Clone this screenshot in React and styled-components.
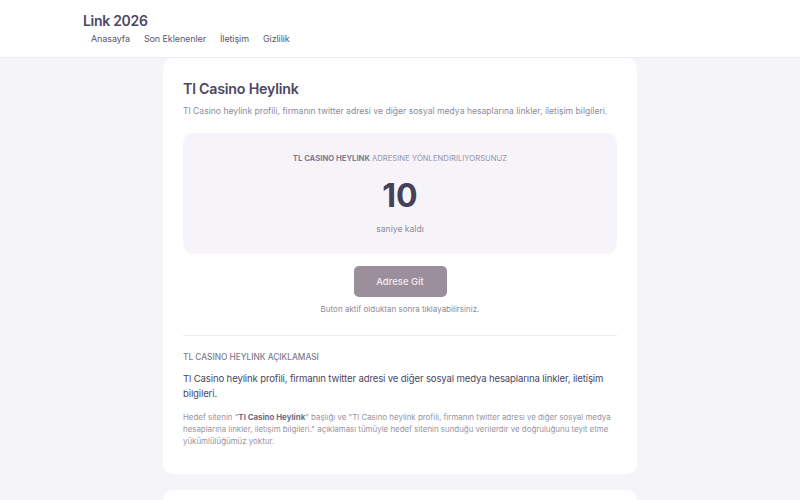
import React from "react"
import styled, { createGlobalStyle } from "styled-components"

const GlobalStyle = createGlobalStyle`
  html, body {
    margin: 0;
    padding: 0;
    background: #f5f4f8;
    font-family: Inter, "Noto Sans", sans-serif;
    color: #4a4762;
  }
  * { box-sizing: border-box; }
`

const Header = styled.header`
  background: #fff;
  border-bottom: 1px solid #ecebf0;
  height: 58px;
  padding: 12px 0 0 83px;
`

const Brand = styled.div`
  font-size: 14px;
  font-weight: 600;
  color: #4a4762;
  letter-spacing: -0.3px;
`

const Nav = styled.nav`
  display: flex;
  gap: 14px;
  margin: 4px 0 0 8px;
`

const NavItem = styled.span`
  font-size: 9px;
  color: #5a5770;
  letter-spacing: -0.1px;
  cursor: pointer;
`

const Main = styled.main`
  width: 474px;
  margin: 0 auto;
  display: flex;
  flex-direction: column;
  gap: 16px;
`

const Card = styled.section`
  background: #fff;
  border-radius: 10px;
  padding: 22px 20px 27px;
  min-height: ${p => p.$min || 0}px;
`

const Title = styled.h1`
  margin: 0;
  font-size: 14.2px;
  font-weight: 600;
  color: #4a4762;
  letter-spacing: -0.2px;
`

const Lead = styled.p`
  margin: 9px 0 0;
  font-size: 8.6px;
  color: #8d8a9c;
`

const Countdown = styled.div`
  margin-top: 17px;
  background: #f6f4f9;
  border-radius: 10px;
  height: 121px;
  display: flex;
  flex-direction: column;
  align-items: center;
  padding-top: 21px;
`

const Redirect = styled.div`
  font-size: 7.7px;
  color: #9793a6;
  text-transform: uppercase;
  b { color: #7e7b90; font-weight: 700; margin-right: 2px; }
`

const Seconds = styled.div`
  font-size: 32px;
  font-weight: 700;
  color: #444158;
  margin-top: 13px;
  line-height: 40px;
`

const Remain = styled.div`
  font-size: 8.6px;
  color: #8d8a9c;
  margin-top: 8px;
`

const Center = styled.div`
  display: flex;
  flex-direction: column;
  align-items: center;
  margin-top: 12px;
`

const GoButton = styled.button`
  width: 93px;
  height: 31px;
  border: none;
  border-radius: 5px;
  background: #9c8f9c;
  color: #f1eef2;
  font-family: inherit;
  font-size: 9.5px;
  font-weight: 500;
`

const Hint = styled.div`
  margin-top: 7px;
  font-size: 8px;
  color: #8d8a9c;
`

const Divider = styled.hr`
  border: none;
  border-top: 1px solid #ecebf0;
  margin: 21px 0 16px;
`

const SectionLabel = styled.h2`
  margin: 0;
  font-size: 8.3px;
  font-weight: 500;
  color: #7e7b90;
  text-transform: uppercase;
`

const Body = styled.p`
  margin: 9px 0 0;
  font-size: 9.6px;
  line-height: 15px;
  color: #4a4762;
  letter-spacing: -0.15px;
`

const Note = styled.p`
  margin: 10px 0 0;
  font-size: 7.9px;
  line-height: 12px;
  color: #97939f;
  b { color: #6f6c80; font-weight: 700; }
`

export default function App() {
  return (
    <>
      <GlobalStyle />
      <Header>
        <Brand>Link 2026</Brand>
        <Nav>
          <NavItem>Anasayfa</NavItem>
          <NavItem>Son Eklenenler</NavItem>
          <NavItem>İletişim</NavItem>
          <NavItem>Gizlilik</NavItem>
        </Nav>
      </Header>
      <Main>
        <Card>
          <Title>Tl Casino Heylink</Title>
          <Lead>Tl Casino heylink profili, firmanın twitter adresi ve diğer sosyal medya hesaplarına linkler, iletişim bilgileri.</Lead>
          <Countdown>
            <Redirect><b>Tl Casino Heylink</b>adresine yönlendiriliyorsunuz</Redirect>
            <Seconds>10</Seconds>
            <Remain>saniye kaldı</Remain>
          </Countdown>
          <Center>
            <GoButton disabled>Adrese Git</GoButton>
            <Hint>Buton aktif olduktan sonra tıklayabilirsiniz.</Hint>
          </Center>
          <Divider />
          <SectionLabel>Tl Casino Heylink Açıklaması</SectionLabel>
          <Body>Tl Casino heylink profili, firmanın twitter adresi ve diğer sosyal medya hesaplarına linkler, iletişim bilgileri.</Body>
          <Note>
            Hedef sitenin "<b>Tl Casino Heylink</b>" başlığı ve "Tl Casino heylink profili, firmanın twitter adresi ve diğer sosyal medya hesaplarına linkler, iletişim bilgileri." açıklaması tümüyle hedef sitenin sunduğu verilerdir ve doğruluğunu teyit etme yükümlülüğümüz yoktur.
          </Note>
        </Card>
        <Card $min={120} />
      </Main>
    </>
  )
}
